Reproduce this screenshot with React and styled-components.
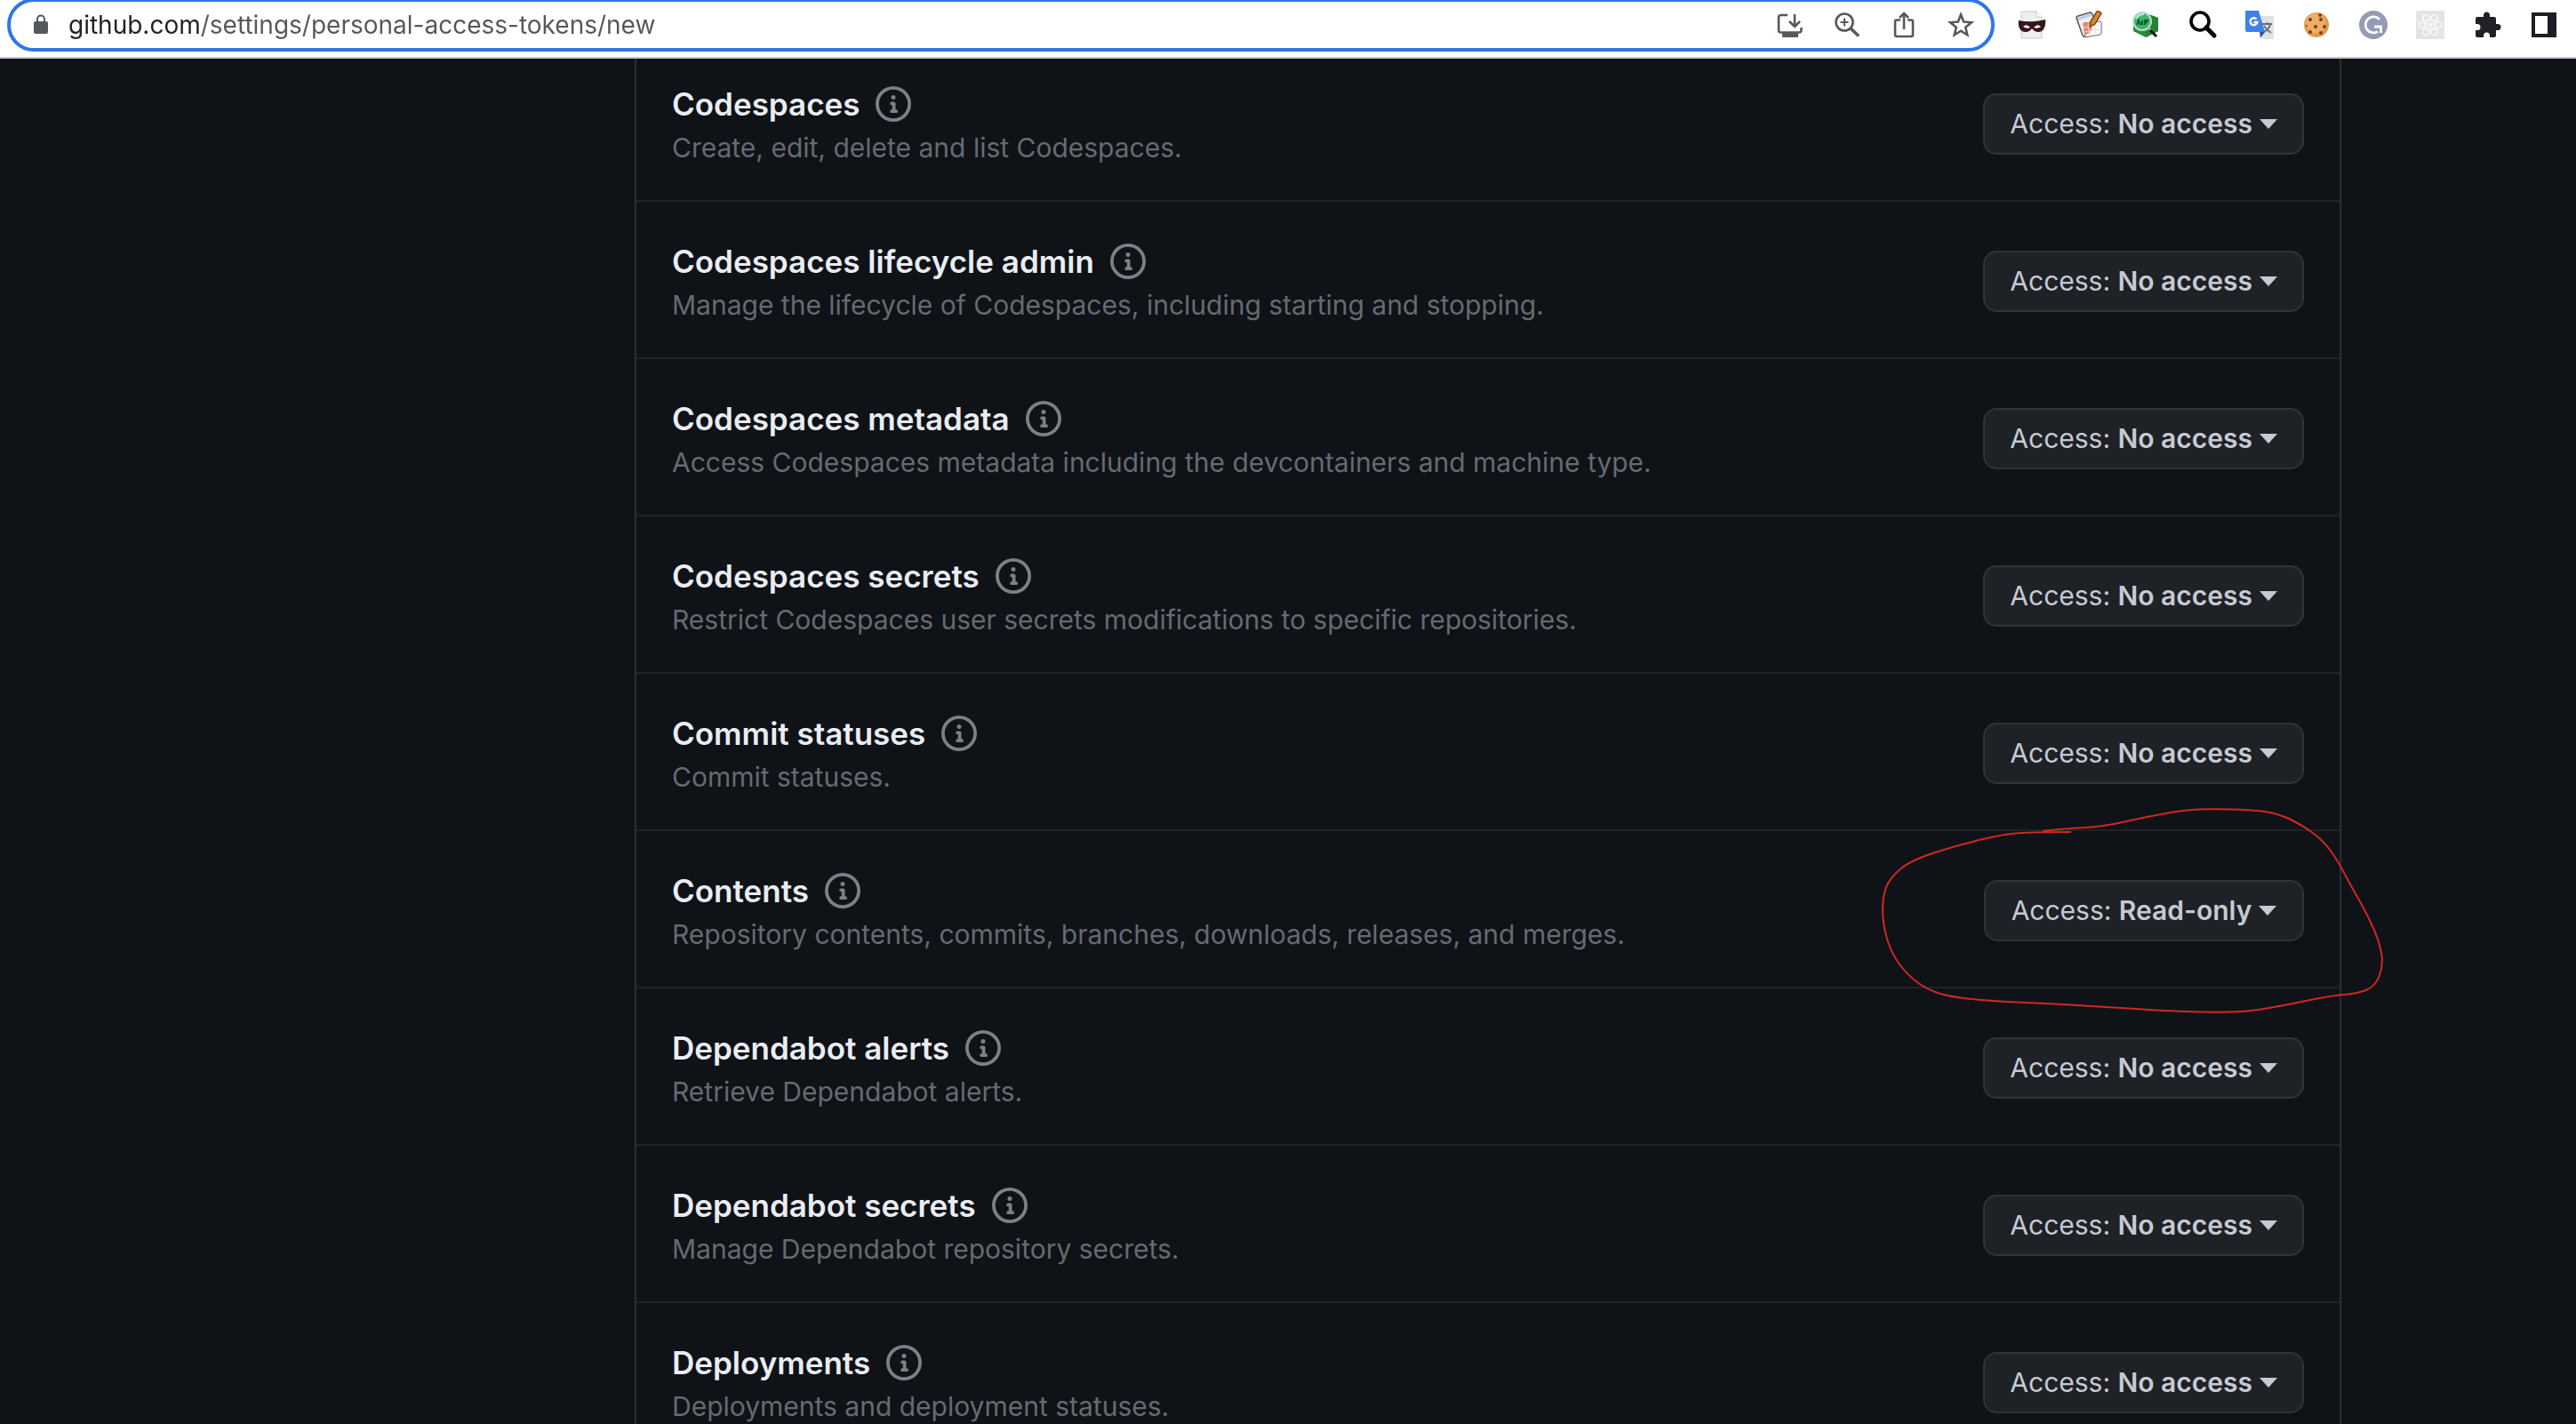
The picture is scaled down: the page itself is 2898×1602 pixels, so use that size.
import React from 'react';
import styled, { createGlobalStyle } from 'styled-components';

const GlobalStyle = createGlobalStyle`
  * { box-sizing: border-box; }
  body {
    margin: 0;
    background: #0f1217;
    font-family: Inter, "Liberation Sans", sans-serif;
  }
`;

const Page = styled.div`
  display: flex;
  flex-direction: column;
  height: 100vh;
  overflow: hidden;
`;

const Toolbar = styled.header`
  position: relative;
  z-index: 1;
  flex: none;
  display: flex;
  align-items: flex-start;
  gap: 26px;
  height: 66px;
  padding: 0 20px 0 8px;
  background: #ffffff;
  border-bottom: 2px solid #c4c8cb;
`;

const AddressBar = styled.form`
  flex: 1;
  display: flex;
  align-items: center;
  gap: 22px;
  height: 60px;
  margin-top: -2px;
  padding: 0 18px 0 25px;
  border: 4px solid #2e75e8;
  border-radius: 30px;
`;

const AddressInput = styled.input`
  flex: 1;
  min-width: 0;
  padding: 0;
  border: 0;
  outline: 0;
  font: 400 28px/36px Inter, "Liberation Sans", sans-serif;
  color: transparent;
  caret-color: #202124;
  background: linear-gradient(90deg, #202124 150px, #54575b 150px);
  -webkit-background-clip: text;
  background-clip: text;
`;

const IconGroup = styled.div`
  display: flex;
  gap: 32px;
  padding-top: ${(p) => (p.$offset ? '12px' : '0')};
`;

const IconButton = styled.button`
  display: block;
  width: 32px;
  height: 32px;
  padding: 0;
  border: 0;
  background: none;
  color: #55585c;

  svg { display: block; overflow: visible; }
`;

const Main = styled.main`
  flex: 1;
  min-height: 0;
  display: grid;
  grid-template-columns: 714fr 1920fr 264fr;
  align-items: start;
`;

const PermissionList = styled.ul`
  grid-column: 2;
  list-style: none;
  margin: -16px 0 0;
  padding: 0;
  border: solid #2b2e33;
  border-width: 0 2px;
`;

const PermissionRow = styled.li`
  position: relative;
  display: flex;
  align-items: center;
  justify-content: space-between;
  padding: 40px 40px 36px;
  border-bottom: 2px solid #1f2328;
`;

const TitleLine = styled.div`
  display: flex;
  align-items: center;
  gap: 18px;
`;

const Title = styled.h2`
  margin: 0;
  font-size: 35px;
  font-weight: 600;
  line-height: 54px;
  color: #e9edf2;
`;

const InfoButton = styled.button`
  display: block;
  padding: 0;
  border: 0;
  background: none;
  color: #7d8087;

  svg { display: block; }
`;

const Description = styled.p`
  margin: 0;
  font-size: 30px;
  line-height: 45px;
  color: #666a71;
`;

const AccessButton = styled.button`
  display: flex;
  align-items: center;
  justify-content: center;
  gap: 8px;
  min-width: 360px;
  height: 69px;
  padding: 0 28px;
  border: 2px solid #303338;
  border-radius: 15px;
  background: #1e2126;
  color: #c5cad3;
  font: 400 30px/45px Inter, "Liberation Sans", sans-serif;

  strong { font-weight: 600; }
`;

const Caret = styled.span`
  border: 10px solid transparent;
  border-top: 11px solid currentColor;
  border-bottom: 0;
`;

const Annotation = styled.svg`
  position: absolute;
  top: -35px;
  right: -58px;
  pointer-events: none;
`;

const permissions = [
  { name: 'Codespaces', text: 'Create, edit, delete and list Codespaces.' },
  { name: 'Codespaces lifecycle admin', text: 'Manage the lifecycle of Codespaces, including starting and stopping.' },
  { name: 'Codespaces metadata', text: 'Access Codespaces metadata including the devcontainers and machine type.' },
  { name: 'Codespaces secrets', text: 'Restrict Codespaces user secrets modifications to specific repositories.' },
  { name: 'Commit statuses', text: 'Commit statuses.' },
  { name: 'Contents', text: 'Repository contents, commits, branches, downloads, releases, and merges.', access: 'Read-only', circled: true },
  { name: 'Dependabot alerts', text: 'Retrieve Dependabot alerts.' },
  { name: 'Dependabot secrets', text: 'Manage Dependabot repository secrets.' },
  { name: 'Deployments', text: 'Deployments and deployment statuses.' },
];

// Points of the freehand loop, smoothed by quadratic segments.
const strokePoints = [
  [2330, 936], [2284, 936], [2251, 939], [2202, 951], [2149, 968], [2126, 988], [2118, 1008],
  [2118, 1040], [2128, 1073], [2147, 1098], [2168, 1113], [2192, 1121], [2235, 1126], [2325, 1130],
  [2431, 1137], [2488, 1139], [2529, 1138], [2570, 1131], [2623, 1120], [2651, 1118], [2672, 1110],
  [2681, 1087], [2678, 1063], [2664, 1030], [2645, 997], [2631, 970], [2615, 947], [2590, 928],
  [2562, 915], [2533, 911], [2488, 910], [2460, 911], [2419, 918], [2366, 930], [2325, 932], [2298, 935],
];

function smoothPath(points) {
  let d = `M${points[0][0]} ${points[0][1]}`;
  for (let i = 1; i < points.length - 1; i += 1) {
    const [x, y] = points[i];
    const [nx, ny] = points[i + 1];
    d += `Q${x} ${y} ${(x + nx) / 2} ${(y + ny) / 2}`;
  }
  const [lx, ly] = points[points.length - 1];
  return `${d}L${lx} ${ly}`;
}

const Svg = ({ children }) => (
  <svg width="32" height="32" viewBox="0 0 32 32" fill="none" aria-hidden="true">{children}</svg>
);

const LockIcon = () => (
  <svg width="18" height="24" viewBox="0 0 18 24" fill="none" aria-hidden="true">
    <rect x="1" y="8" width="16" height="14" rx="2" fill="#55585c" />
    <path d="M5 9V5.500a4 4 0 0 1 8 0V9" stroke="#55585c" strokeWidth="2" />
  </svg>
);

const InstallIcon = () => (
  <Svg>
    <path d="M13 5H5.500a2.500 2.500 0 0 0-2.500 2.500V22a2.500 2.500 0 0 0 2.500 2.500H26a2.500 2.500 0 0 0 2.500-2.500v-3M21 4v13M15 12l6 6 6-6" stroke="currentColor" strokeWidth="2.600" />
    <path d="M7 25h18v5H7z" fill="currentColor" />
  </Svg>
);

const ZoomIcon = () => (
  <Svg>
    <circle cx="13" cy="13" r="9.500" stroke="currentColor" strokeWidth="2.600" />
    <path d="M13 8.500v9M8.500 13h9" stroke="currentColor" strokeWidth="2" />
    <path d="M20 20l9 8.500" stroke="currentColor" strokeWidth="3.600" />
  </Svg>
);

const ShareIcon = () => (
  <Svg>
    <path d="M12 10.500H8A2 2 0 0 0 6 12.500V27a2 2 0 0 0 2 2h16a2 2 0 0 0 2-2V12.500a2 2 0 0 0-2-2h-4M16 21V4M11 8l5-5 5 5" stroke="currentColor" strokeWidth="2.600" />
  </Svg>
);

const StarIcon = () => (
  <Svg>
    <path d="M16 4.500l3.200 8.100 8.700.6-6.700 5.600 2.100 8.500L16 22.700l-7.300 4.600 2.100-8.500-6.700-5.600 8.700-.6z" stroke="currentColor" strokeWidth="2.600" />
  </Svg>
);

const MaskIcon = () => (
  <Svg>
    <path d="M4 1h17l6 6v24H4z" fill="#eeeff0" stroke="#c9cbcd" />
    <path d="M21 1v6h6" fill="#fff" stroke="#c9cbcd" />
    <path d="M1 11q15 3 30-1 1 6-2 11-2 3-6 3-4 0-7-4-3 4-7 4-5 0-7-4-2-4-1-9z" fill="#35161b" />
    <path d="M6 18q4-4 8 1-4 2-8-1zM18 19q4-5 8-1-4 3-8 1z" fill="#fff" />
  </Svg>
);

const NotesIcon = () => (
  <Svg>
    <path d="M2 8q0-2 2-2l13-4q2 0 3 2l7 19q-7 2-15 6-2 1-3-1z" fill="#f3f1ee" stroke="#55565a" strokeWidth="1.500" />
    <path d="M3 8l15-5 1 3-15 5z" fill="#b9cde6" />
    <path d="M10 14l18-2q2 0 2 2v11q0 2-2 2l-16 3z" fill="#fff" stroke="#6b6766" />
    <path d="M9 14l10-1 1 6-3 6-5 2z" fill="#ee8a6c" />
    <path d="M10 19l17-3M11 24l17-3M15 14l2 14M22 14l2 12" stroke="#e8d9d4" />
    <path d="M18 12L25 1q3-1 5 2l-7 12-6 3z" fill="#d98a2b" stroke="#7b4a16" strokeWidth="1.500" />
  </Svg>
);

const InspectIcon = () => (
  <Svg>
    <path d="M16 3l14 5v15l-14 7-14-7V8z" fill="#2f8a3e" />
    <path d="M16 3l14 5v15l-14 7z" fill="#27803a" />
    <circle cx="12" cy="12" r="10" fill="#3db36b" stroke="#b9dfc2" strokeWidth="2" />
    <path d="M5 9q3-5 9-5" stroke="#c4efd2" strokeWidth="2" />
    <path d="M6 16l2-5 2 5M12 16v-5M15 16v-5h4M15 13h3" stroke="#0d5a2b" strokeWidth="2" />
    <path d="M19 20l3 2" stroke="#8ea596" strokeWidth="3" />
    <path d="M21 22l7 7" stroke="#111" strokeWidth="3" />
  </Svg>
);

const SearchIcon = () => (
  <Svg>
    <circle cx="13" cy="12" r="10" stroke="#000" strokeWidth="3.600" />
    <path d="M20 19l9 9" stroke="#000" strokeWidth="5" strokeLinecap="round" />
  </Svg>
);

const TranslateIcon = () => (
  <Svg>
    <path d="M14 6h18v26H20z" fill="#dfe1e4" />
    <path d="M0 0h15l7 24H2a2 2 0 0 1-2-2z" fill="#3f80ea" />
    <path d="M16 24h6l-5 7z" fill="#2c55b4" />
    <path d="M12.500 9.500a4 4 0 1 0 1 3.500H9.500" stroke="#fff" strokeWidth="2.400" />
    <path d="M19 15h11M24.500 13v2M28 15q-1 6-7 9M21 17q3 5 8 8" stroke="#6b7075" strokeWidth="1.800" />
  </Svg>
);

const CookieIcon = () => (
  <Svg>
    <circle cx="16" cy="16" r="14" fill="#e39a4f" />
    <circle cx="15" cy="14" r="11" fill="#eeae68" />
    <g fill="#7b3f1b">
      <circle cx="9" cy="10" r="2" /><circle cx="20" cy="5" r="2" /><circle cx="15" cy="18" r="2" />
      <circle cx="9" cy="24" r="2" /><circle cx="21" cy="10" r="2" /><circle cx="25" cy="18" r="2" />
      <circle cx="21" cy="25" r="2" /><circle cx="5" cy="17" r="1" />
    </g>
  </Svg>
);

const GrammarIcon = () => (
  <Svg>
    <circle cx="16" cy="16" r="16" fill="#959ab5" />
    <path d="M23 10a9 9 0 1 0-2 13.500M17 18h7.500v7" stroke="#fff" strokeWidth="2.800" />
  </Svg>
);

const AtomIcon = () => (
  <Svg>
    <path d="M0 0h32v32H0z" fill="#e4e4e4" />
    <g stroke="#f8f8f8" strokeWidth="1.500">
      <ellipse cx="16" cy="16" rx="13" ry="5" />
      <ellipse cx="16" cy="16" rx="13" ry="5" transform="rotate(60 16 16)" />
      <ellipse cx="16" cy="16" rx="13" ry="5" transform="rotate(120 16 16)" />
    </g>
    <circle cx="16" cy="16" r="2.500" fill="#f8f8f8" />
  </Svg>
);

const PuzzleIcon = () => (
  <Svg>
    <path d="M5 7h7V5a3.500 3.500 0 0 1 7 0v2h5a2 2 0 0 1 2 2v6h2a3.500 3.500 0 0 1 0 7h-2v6a2 2 0 0 1-2 2h-5v-2a3.500 3.500 0 0 0-7 0v2H5a2 2 0 0 1-2-2v-6h2a3.500 3.500 0 0 0 0-7H3V9a2 2 0 0 1 2-2z" fill="#202127" />
  </Svg>
);

const PanelIcon = () => (
  <Svg>
    <path fillRule="evenodd" d="M2 2h28v28H2zM6 6v20h14V6z" fill="#1d1e24" />
  </Svg>
);

const InfoIcon = () => (
  <svg width="40" height="40" viewBox="0 0 16 16" fill="currentColor" aria-hidden="true">
    <path d="M8 1.500a6.500 6.500 0 1 0 0 13 6.500 6.500 0 0 0 0-13ZM0 8a8 8 0 1 1 16 0A8 8 0 0 1 0 8Zm6.500-.25A.75.75 0 0 1 7.250 7h1a.75.75 0 0 1 .75.75v2.750h.25a.75.75 0 0 1 0 1.500h-2a.75.75 0 0 1 0-1.500h.25v-2h-.25a.75.75 0 0 1-.75-.75ZM8 6a1 1 0 1 1 0-2 1 1 0 0 1 0 2Z" />
  </svg>
);

const pageActions = [
  ['Install app', InstallIcon],
  ['Zoom', ZoomIcon],
  ['Share this page', ShareIcon],
  ['Bookmark this tab', StarIcon],
];

const extensions = [
  ['Private mode', MaskIcon],
  ['Notes', NotesIcon],
  ['Inspector', InspectIcon],
  ['Search', SearchIcon],
  ['Translate', TranslateIcon],
  ['Cookies', CookieIcon],
  ['Grammar', GrammarIcon],
  ['React tools', AtomIcon],
  ['Extensions', PuzzleIcon],
  ['Side panel', PanelIcon],
];

const IconRow = ({ items, offset }) => (
  <IconGroup $offset={offset}>
    {items.map(([label, Icon]) => (
      <IconButton key={label} type="button" aria-label={label}><Icon /></IconButton>
    ))}
  </IconGroup>
);

const Permission = ({ name, text, access = 'No access', circled }) => (
  <PermissionRow>
    <div>
      <TitleLine>
        <Title>{name}</Title>
        <InfoButton type="button" aria-label={`About ${name}`}><InfoIcon /></InfoButton>
      </TitleLine>
      <Description>{text}</Description>
    </div>
    <AccessButton type="button" aria-haspopup="menu">
      <span>Access: <strong>{access}</strong></span>
      <Caret />
    </AccessButton>
    {circled && (
      <Annotation width="580" height="245" viewBox="2110 900 580 245" fill="none" aria-hidden="true">
        <path d={smoothPath(strokePoints)} stroke="#cf2823" strokeWidth="2" />
      </Annotation>
    )}
  </PermissionRow>
);

export default function App() {
  return (
    <Page>
      <GlobalStyle />
      <Toolbar>
        <AddressBar onSubmit={(e) => e.preventDefault()}>
          <LockIcon />
          <AddressInput
            type="text"
            aria-label="Address"
            defaultValue="github.com/settings/personal-access-tokens/new"
          />
          <IconRow items={pageActions} />
        </AddressBar>
        <IconRow items={extensions} offset />
      </Toolbar>
      <Main>
        <PermissionList>
          {permissions.map((p) => <Permission key={p.name} {...p} />)}
        </PermissionList>
      </Main>
    </Page>
  );
}
